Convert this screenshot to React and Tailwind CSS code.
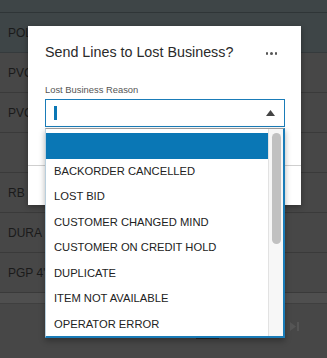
import React from "react";

const items = [
  "",
  "BACKORDER CANCELLED",
  "LOST BID",
  "CUSTOMER CHANGED MIND",
  "CUSTOMER ON CREDIT HOLD",
  "DUPLICATE",
  "ITEM NOT AVAILABLE",
  "OPERATOR ERROR",
];

const rows = ["PVC 2\"", "PVC 3\"", "", "RB INC", "DURA P", "PGP 4\""];

export default function App() {
  return (
    <div
      className="relative w-[327px] h-[358px] overflow-hidden bg-[#474747]"
      style={{ fontFamily: '"Liberation Sans", Arial, sans-serif' }}
    >
      {/* background table */}
      <div className="flex flex-col">
        <div className="h-[13px] bg-[#3e4547] border-b border-[#2f3537]" />
        <div className="h-[40px] bg-[#3e4547] border-b border-[#353a3c] flex items-center pl-2 text-[12px] text-[#1a1a1a]">
          <span className="w-[37px] overflow-hidden whitespace-nowrap">POLY</span>
        </div>
        {rows.map((r, i) => (
          <div
            key={i}
            className="h-[40px] border-b border-[#3a3a3a] flex items-center pl-2 text-[12px] text-[#1a1a1a]"
          >
            <span className="w-[37px] overflow-hidden whitespace-nowrap">{r}</span>
          </div>
        ))}
        <div className="h-[11px] bg-[#4f4f4f] border-b border-[#3f3f3f]" />
        <div className="relative h-[52px]">
          <div className="absolute left-[196px] top-[14px] w-[23px] h-[21px] border border-[#2a2a2a]" />
          <svg className="absolute left-[289px] top-[17px]" width="11" height="11" viewBox="0 0 11 11">
            <path d="M1 1 L7 5.5 L1 10 Z" fill="#555" />
            <rect x="8" y="1" width="2" height="9" fill="#555" />
          </svg>
        </div>
      </div>

      {/* dialog */}
      <div className="absolute left-[28px] top-[26px] w-[273px] h-[179px] bg-white shadow-[0_2px_6px_rgba(0,0,0,0.35)] flex flex-col">
        <div className="flex items-center justify-between pl-[17px] pr-[24px] pt-[14px] h-[37px]">
          <span className="text-[14.3px] text-[#2a2a2a] leading-[20px]">Send Lines to Lost Business?</span>
          <span className="flex gap-[2px] pt-[4px]">
            <span className="w-[2.5px] h-[2.5px] rounded-full bg-[#555]" />
            <span className="w-[2.5px] h-[2.5px] rounded-full bg-[#555]" />
            <span className="w-[2.5px] h-[2.5px] rounded-full bg-[#555]" />
          </span>
        </div>
        <div className="pl-[17px] pt-[21px] text-[9.4px] leading-[12px] text-[#555]">Lost Business Reason</div>
        <div className="ml-[17px] mt-[3px] w-[240px] h-[28px] border border-[#1a7cb8] flex items-center justify-between pl-[8px] pr-[9px]">
          <span className="w-[3px] h-[14px] bg-[#0a77b5]" />
          <svg width="9" height="6" viewBox="0 0 9 6">
            <path d="M0 6 L4.5 0 L9 6 Z" fill="#444" />
          </svg>
        </div>
        <div className="mt-auto h-[40px] border-t border-[#cfcfcf]" />
      </div>

      {/* dropdown list */}
      <div className="absolute left-[45px] top-[128px] w-[240px] h-[210px] bg-white border-t border-t-[#9a9a9a] border-l border-l-[#b9cfdd] border-r-2 border-r-[#1a7cb8] border-b-2 border-b-[#1a7cb8] shadow-[0_3px_6px_rgba(0,0,0,0.3)] flex">
        <div className="flex-1 pt-[4px]">
          {items.map((it, i) => (
            <div
              key={i}
              className={
                "h-[25.5px] flex items-center pl-[8px] text-[11.2px] text-[#222] whitespace-nowrap " +
                (i === 0 ? "bg-[#0a77b5]" : "")
              }
            >
              {it}
            </div>
          ))}
        </div>
        <div className="w-[15px] bg-[#f7f7f7] border-l border-[#e2e2e2] pt-[4px] flex justify-center">
          <div className="w-[9px] h-[111px] rounded-full bg-[#c1c1c1]" />
        </div>
      </div>
    </div>
  );
}
